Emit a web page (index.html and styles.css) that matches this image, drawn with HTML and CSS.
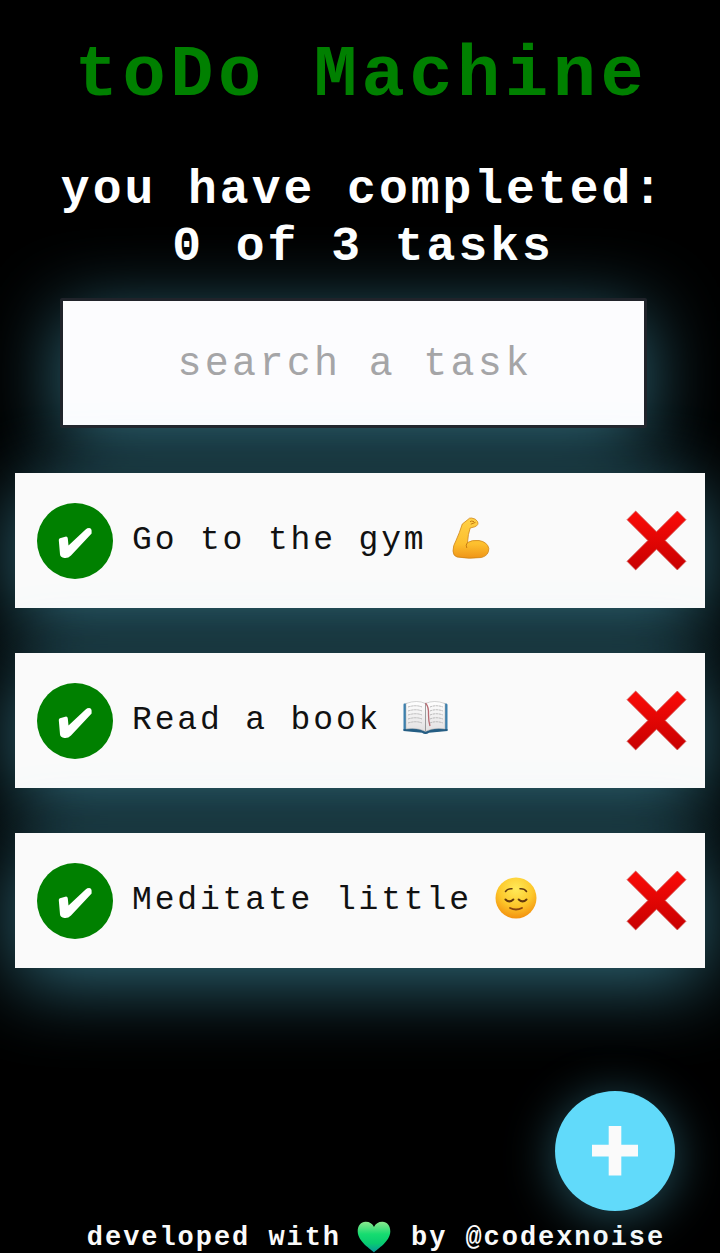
FILE: index.html
```html
<!DOCTYPE html>
<html lang="en">
<head>
<meta charset="utf-8">
<title>toDo Machine</title>
<link rel="stylesheet" href="styles.css">
</head>
<body>
<svg class="defs" aria-hidden="true">
  <defs>
    <linearGradient id="red" x1="0" y1="0" x2="0" y2="1"><stop offset="0" stop-color="#fb0b08"/><stop offset="1" stop-color="#c80000"/></linearGradient>
    <linearGradient id="skin" x1="0" y1="0" x2="0" y2="1"><stop offset="0" stop-color="#ffd148"/><stop offset=".65" stop-color="#fdbf2e"/><stop offset="1" stop-color="#ef9417"/></linearGradient>
    <radialGradient id="face" cx=".5" cy=".28" r=".75"><stop offset="0" stop-color="#ffea59"/><stop offset=".55" stop-color="#fdc82b"/><stop offset="1" stop-color="#f28c0c"/></radialGradient>
    <linearGradient id="heart" x1="0" y1="0" x2="0" y2="1"><stop offset="0" stop-color="#8be78e"/><stop offset=".4" stop-color="#16dc70"/><stop offset=".7" stop-color="#08cc70"/><stop offset="1" stop-color="#0b96a0"/></linearGradient>
    <linearGradient id="page" x1="0" y1="0" x2="0" y2="1"><stop offset="0" stop-color="#fff"/><stop offset="1" stop-color="#e2e0e1"/></linearGradient>
    <symbol id="check" viewBox="0 0 36 32"><path fill="#fff" d="M1.8 13.2Q1.6 11.8 3 11.3L8.2 9.7Q10.600 9.200 10.800 11.400L11.500 18.400L28.600 2.400Q30.200 1 32.300 1Q34.600 1.300 34.600 3.600V6.500L14 28.500Q11 31.500 7.400 31Q3.300 30.500 3 27.300Z"/></symbol>
    <symbol id="cross" viewBox="0 0 60 60"><path fill="url(#red)" stroke="#d05a58" stroke-width=".8" d="M9.500 1L30 21.500L50.500 1L59 9.500L38.500 30L59 50.500L50.500 59L30 38.500L9.500 59L1 50.500L21.500 30L1 9.500Z"/></symbol>
  </defs>
</svg>
<main class="app">
  <h1 class="title">toDo Machine</h1>
  <h2 class="counter">you have completed:<br>0 of 3 tasks</h2>
  <input class="search" placeholder="search a task">
  <ul class="tasks">
    <li class="task">
      <span class="done"><svg class="check"><use href="#check"/></svg></span>
      <p class="label">Go to the gym</p>
      <svg class="emoji arm" viewBox="0 0 38 42"><path fill="url(#skin)" stroke="#cf8516" stroke-width=".8" d="M16 2.500Q17 .8 19.500 1Q24 1.500 25.500 4.500Q27.200 8 22.800 9.800L18.200 11Q16 17 15.500 25.500Q20 22.800 27 23.500Q35.500 25 36.800 31.500Q37 38.500 29.500 40.500Q17 42.200 5 40Q1 38.700 1 34Q1 28.500 4 23.500Q7.500 16 10.300 7Z"/><path fill="none" stroke="#c77b11" stroke-width="1" d="M18 4.800Q19.500 3.300 22 4.700M18.800 7.200L23.500 5.300M15.500 25.500Q13.200 28 14.800 31"/></svg>
      <button class="remove" aria-label="Delete"><svg class="cross"><use href="#cross"/></svg></button>
    </li>
    <li class="task">
      <span class="done"><svg class="check"><use href="#check"/></svg></span>
      <p class="label">Read a book</p>
      <svg class="emoji book" viewBox="0 0 45 35"><path fill="#3c80ae" d="M1 3.500Q.5 3.500 .5 5V30.500L19.500 32Q22.500 35 25.500 32L44.500 30.500V5Q44.500 3.500 43.500 3.500Z"/><path fill="#245d83" d="M.5 29V31L19 32.700Q22.500 35.500 26 32.700L44.500 31V29Z"/><path fill="url(#page)" stroke="#aaa" stroke-width=".5" d="M3 3.500Q14 -.5 22.500 3.500Q31 -.5 42 3.500V29Q31 27.200 22.500 31.500Q14 27.200 3 29Z"/><path fill="none" stroke="#aaa" stroke-width=".8" stroke-dasharray="2.5 .6" d="M5 7Q13 4.500 19 7M5 11Q13 8.500 19 11M5 15Q13 12.500 19 15M5 19Q13 16.500 19 19M5 23Q13 20.500 19 23M27 7Q33 4.500 40 7M27 11Q33 8.500 40 11M27 15Q33 12.500 40 15M27 19Q33 16.500 40 19M27 23Q33 20.500 40 23"/><path fill="none" stroke="#888" stroke-width=".8" d="M22.500 3.500V31"/><path fill="none" stroke="#b96a72" stroke-width="1.300" d="M22.500 3Q26 7 25.500 15Q25.500 21 27 26"/></svg>
      <button class="remove" aria-label="Delete"><svg class="cross"><use href="#cross"/></svg></button>
    </li>
    <li class="task">
      <span class="done"><svg class="check"><use href="#check"/></svg></span>
      <p class="label">Meditate little</p>
      <svg class="emoji calm" viewBox="0 0 42 42"><circle cx="21" cy="21" r="20.500" fill="url(#face)"/><g fill="none" stroke="#63380d" stroke-linecap="round"><path stroke-width="1.500" d="M10.500 14.500Q12.500 11.300 17 11.700M25 11.700Q29.500 11.300 31.500 14.500"/><path stroke-width="2" d="M10.500 22.500Q14.300 26.300 18.300 22.500M23.700 22.500Q27.700 26.300 31.500 22.500"/><path stroke-width="1.800" stroke="#8a450f" d="M15 31Q21 34 27 31"/></g></svg>
      <button class="remove" aria-label="Delete"><svg class="cross"><use href="#cross"/></svg></button>
    </li>
  </ul>
  <footer class="credits"><span>developed with</span><svg class="heart" viewBox="0 0 34 32"><path fill="url(#heart)" d="M17 31.500C14 28 1 21 .7 10.500C.6 4.500 4 1 8.500 .8C12.500 .7 15.500 2.700 17 6C18.500 2.700 21.500 .7 25.500 .8C30 1 33.400 4.500 33.300 10.500C33 21 20 28 17 31.500Z"/></svg><span>by @codexnoise</span></footer>
</main>
<button class="add" aria-label="Add task"><svg class="plus" viewBox="0 0 46 50"><path fill="#fafafa" d="M16.700 0H29.300V18.700H46V30.500H29.300V49.500H16.700V30.500H0V18.700H16.700Z"/></svg></button>
</body>
</html>
```
FILE: styles.css
```css
* { box-sizing: border-box; }
body {
  margin: 0;
  height: 1253px;
  overflow: hidden;
  position: relative;
  background: #000;
  color: #fafafa;
  font-family: "Liberation Mono", "Courier New", monospace;
}
.defs { position: absolute; width: 0; height: 0; }
.app {
  display: flex;
  flex-direction: column;
  align-items: center;
  height: 1253px;
  padding-top: 36px;
}
.title {
  margin: 0 0 46px 3px;
  font-size: 72px;
  line-height: 80px;
  letter-spacing: 4.6px;
  font-weight: 700;
  color: #008000;
}
.counter {
  margin: 0 0 22px 6px;
  font-size: 48px;
  line-height: 57px;
  letter-spacing: 3px;
  text-align: center;
  color: #fff;
}
.search {
  width: 587px;
  height: 130px;
  margin-right: 13px;
  padding: 2px 0 0 3px;
  border: 3px solid #20232a;
  border-radius: 2px;
  background: #fcfcfe;
  font: 40px "Liberation Mono", monospace;
  letter-spacing: 3.3px;
  text-align: center;
  box-shadow: 0 15px 78px rgba(97, 218, 250, .49);
}
.search::placeholder { color: #a5a5a7; opacity: 1; }
.tasks {
  display: flex;
  flex-direction: column;
  gap: 45px;
  width: 690px;
  margin: 45px 0 0;
  padding: 0;
  list-style: none;
}
.task {
  display: flex;
  align-items: center;
  height: 135px;
  padding: 0 18px 0 22px;
  background: #fafafa;
  color: #111;
  box-shadow: 0 15px 78px rgba(97, 218, 250, .49);
}
.done {
  display: grid;
  place-items: center;
  width: 76px;
  height: 76px;
  border-radius: 50%;
  background: #008000;
}
.check { width: 36px; height: 32px; margin-top: 5px; }
.label {
  margin: 0 0 0 19px;
  font-size: 33px;
  line-height: 40px;
  letter-spacing: 2.85px;
  white-space: pre;
}
.emoji { flex: none; margin-bottom: 6px; }
.arm { width: 38px; height: 42px; margin-left: 25px; }
.book { width: 45px; height: 35px; margin-left: 22px; }
.calm { width: 42px; height: 42px; margin-left: 23px; }
.remove {
  margin: 0 0 0 auto;
  padding: 0;
  border: 0;
  background: none;
}
.cross { display: block; width: 61px; height: 61px; }
.credits {
  display: flex;
  align-items: center;
  height: 30px;
  margin: auto 0 0 32px;
  font-size: 27px;
  font-weight: 700;
  line-height: 30px;
  letter-spacing: 1.95px;
}
.heart { width: 34px; height: 32px; margin: 0 20px 2px 16px; }
.add {
  position: absolute;
  right: 45px;
  bottom: 42px;
  display: grid;
  place-items: center;
  width: 120px;
  height: 120px;
  padding: 0;
  border: 0;
  border-radius: 50%;
  background: #61dafa;
  box-shadow: 0 6px 50px rgba(97, 218, 250, .38);
}
.plus { width: 46px; height: 50px; }
```
